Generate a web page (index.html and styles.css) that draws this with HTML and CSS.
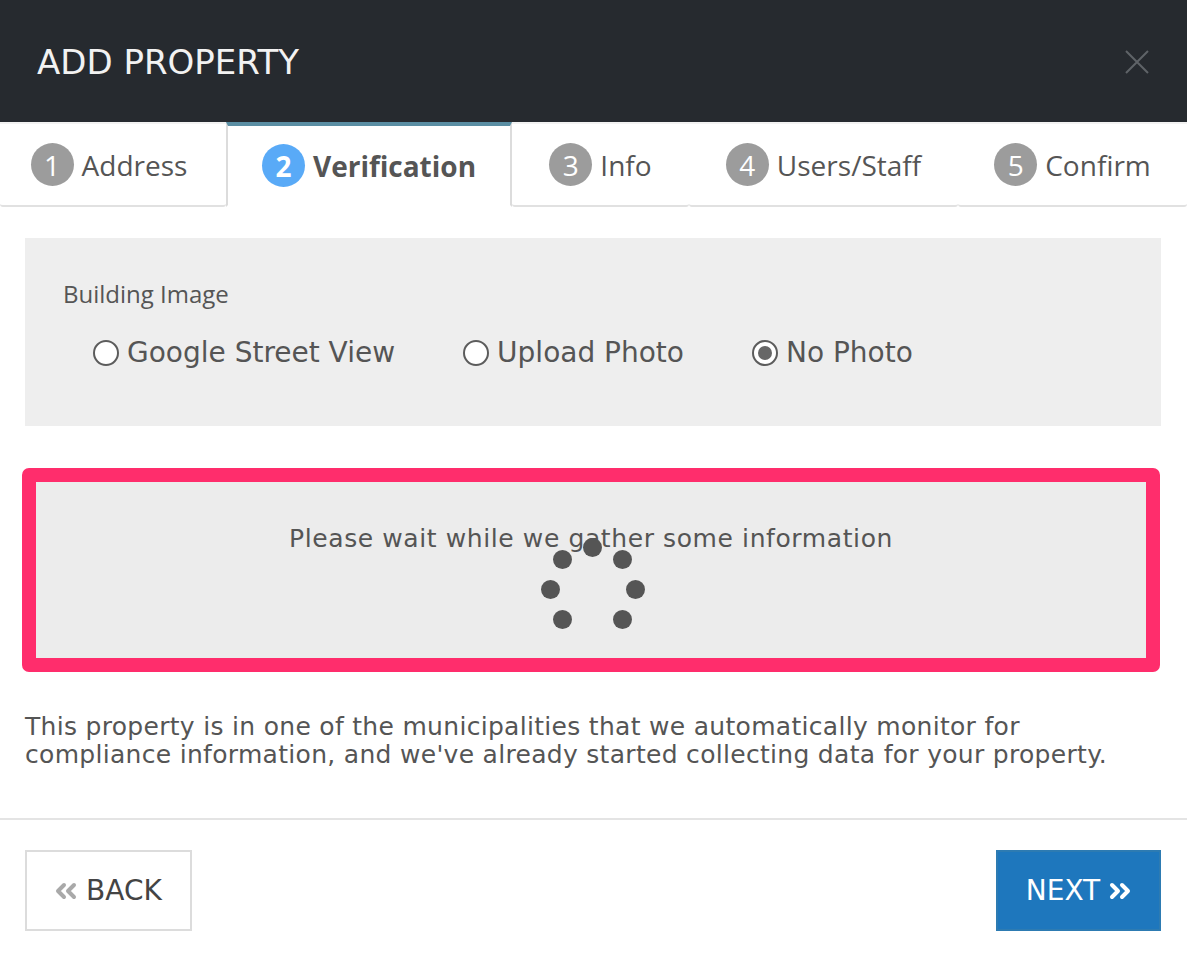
FILE: index.html
```html
<!DOCTYPE html>
<html lang="en">
<head>
    <meta charset="UTF-8">
    <meta name="viewport" content="width=device-width, initial-scale=1.0">
    <title>Add Property</title>
    <link rel="stylesheet" href="styles.css">
</head>
<body>
    <div class="modal">
        <header class="modal-head">
            <h1>ADD PROPERTY</h1>
            <button class="close-btn" aria-label="Close">
                <svg width="24" height="24" viewBox="0 0 24 24">
                    <path d="M1 1L23 23M23 1L1 23" stroke="#5f6368" stroke-width="2" fill="none"/>
                </svg>
            </button>
        </header>

        <nav class="steps">
            <div class="step"><span class="num">1</span>Address</div>
            <div class="step active"><span class="num">2</span>Verification</div>
            <div class="step"><span class="num">3</span>Info</div>
            <div class="step"><span class="num">4</span>Users/Staff</div>
            <div class="step"><span class="num">5</span>Confirm</div>
        </nav>

        <section class="image-panel">
            <p class="panel-label">Building Image</p>
            <div class="radio-row">
                <label class="radio"><span class="dot"></span>Google Street View</label>
                <label class="radio"><span class="dot"></span>Upload Photo</label>
                <label class="radio checked"><span class="dot"></span>No Photo</label>
            </div>
        </section>

        <section class="loading-box">
            <p>Please wait while we gather some information</p>
            <div class="spinner">
                <i style="left: 42px; top: 0px;"></i>
                <i style="left: 72px; top: 12px;"></i>
                <i style="left: 85px; top: 42px;"></i>
                <i style="left: 72px; top: 72px;"></i>
                <i style="left: 12px; top: 72px;"></i>
                <i style="left: 0px; top: 42px;"></i>
                <i style="left: 12px; top: 12px;"></i>
            </div>
        </section>

        <p class="notice">
            This property is in one of the municipalities that we automatically monitor for
            compliance information, and we've already started collecting data for your property.
        </p>

        <footer class="modal-foot">
            <button class="btn btn-back">
                <svg width="22" height="18" viewBox="0 0 22 18">
                    <path d="M9 3L3 9L9 15M19 3L13 9L19 15" stroke="#a9a9a9" stroke-width="4" fill="none" stroke-linecap="round" stroke-linejoin="round"/>
                </svg>
                BACK
            </button>
            <button class="btn btn-next">
                NEXT
                <svg width="22" height="18" viewBox="0 0 22 18">
                    <path d="M3 3L9 9L3 15M13 3L19 9L13 15" stroke="#fff" stroke-width="4" fill="none" stroke-linecap="round" stroke-linejoin="round"/>
                </svg>
            </button>
        </footer>
    </div>
</body>
</html>
```

FILE: styles.css
```css
*{
    box-sizing: border-box;
    padding: 0;
    margin: 0;
}
body{
    background: #fff;
    font-family: "DejaVu Sans", sans-serif;
    color: #555;
}
.modal{
    width: 1187px;
}

/* header */
.modal-head{
    height: 122px;
    background: #262a2f;
    display: flex;
    align-items: center;
    justify-content: space-between;
    padding: 2px 38px 0 37px;
}
.modal-head h1{
    font-weight: normal;
    font-size: 34px;
    color: #f2f2f2;
}
.close-btn{
    background: none;
    border: none;
    display: flex;
    cursor: pointer;
}

/* step tabs */
.steps{
    display: flex;
    height: 85px;
    font-family: "Open Sans", sans-serif;
    font-size: 28px;
}
.step{
    flex: 0 0 auto;
    display: flex;
    align-items: center;
    justify-content: center;
    gap: 8px;
    border-top: 2px solid #f2f2f2;
    border-bottom: 2px solid #e1e1e1;
    border-radius: 0 0 3px 3px;
    color: #555;
    white-space: nowrap;
}
.step:nth-child(1){ width: 226px; padding-right: 8px; }
.step:nth-child(2){ width: 286px; }
.step:nth-child(3){ width: 177px; }
.step:nth-child(4){ width: 269px; }
.step:nth-child(5){ width: 229px; }
.step .num{
    width: 43px;
    height: 43px;
    border-radius: 50%;
    background: #9c9c9c;
    color: #fff;
    display: flex;
    align-items: center;
    justify-content: center;
    font-size: 28px;
}
.step.active{
    border-top: 4px solid #5a8ea3;
    border-left: 2px solid #dcdcdc;
    border-right: 2px solid #dcdcdc;
    border-bottom: 2px solid transparent;
    border-radius: 0;
    font-weight: bold;
}
.step.active .num{
    background: #59aaf7;
}

/* building image options */
.image-panel{
    margin: 31px 26px 0 25px;
    height: 188px;
    background: #eee;
    padding: 39px 38px 0;
}
.panel-label{
    font-family: "Open Sans", sans-serif;
    font-size: 24px;
    line-height: 34px;
}
.radio-row{
    display: flex;
    gap: 68px;
    padding-left: 30px;
    margin-top: 25px;
}
.radio{
    display: flex;
    align-items: center;
    gap: 8px;
    font-size: 28px;
}
.radio .dot{
    width: 26px;
    height: 26px;
    border-radius: 50%;
    border: 2px solid #5c5c5c;
    background: #fff;
    display: flex;
    align-items: center;
    justify-content: center;
}
.radio.checked .dot::after{
    content: "";
    width: 14px;
    height: 14px;
    border-radius: 50%;
    background: #666;
}

/* loading state */
.loading-box{
    position: relative;
    margin: 42px 27px 0 22px;
    height: 204px;
    border: 14px solid #ff2d6c;
    border-radius: 7px;
    background: #ececec;
    text-align: center;
    padding-top: 42px;
}
.loading-box p{
    font-size: 25px;
    letter-spacing: 0.6px;
    line-height: 30px;
}
.spinner{
    position: absolute;
    left: 505px;
    top: 56px;
    width: 104px;
    height: 104px;
}
.spinner i{
    position: absolute;
    width: 19px;
    height: 19px;
    border-radius: 50%;
    background: #555;
}

.notice{
    margin: 41px 25px 0;
    font-size: 25px;
    letter-spacing: 0.3px;
    line-height: 28px;
}

/* footer buttons */
.modal-foot{
    margin-top: 49px;
    border-top: 2px solid #e4e4e4;
    display: flex;
    justify-content: space-between;
    padding: 30px 26px 0 25px;
}
.btn{
    height: 81px;
    display: flex;
    align-items: center;
    justify-content: center;
    gap: 9px;
    font-family: "DejaVu Sans", sans-serif;
    font-size: 28px;
    cursor: pointer;
}
.btn-back{
    width: 167px;
    background: #fff;
    border: 2px solid #dcdcdc;
    color: #444;
}
.btn-next{
    width: 165px;
    background: #1e77bd;
    border: 2px solid #2d7bb2;
    color: #fff;
}
```
